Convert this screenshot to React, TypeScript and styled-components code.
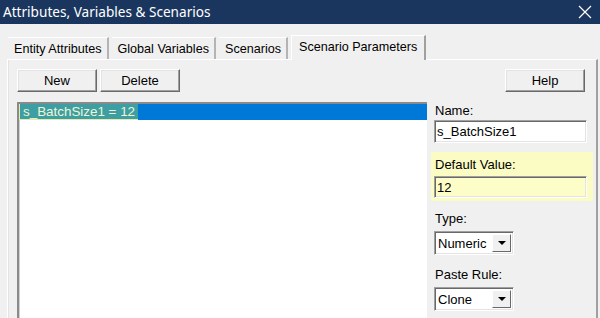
import React from 'react';
import styled, { createGlobalStyle } from 'styled-components';

const GlobalStyle = createGlobalStyle`
  html, body {
    margin: 0;
    padding: 0;
    background: #f0f0f0;
  }
  body {
    font-family: "Liberation Sans", Arial, sans-serif;
    font-size: 13px;
    color: #000;
  }
`;

const Window = styled.div`
  width: 600px;
  height: 318px;
  display: flex;
  flex-direction: column;
  overflow: hidden;
  background: #f0f0f0;
`;

const TitleBar = styled.div`
  height: 24px;
  flex: none;
  background: #1b365e;
  color: #fff;
  display: flex;
  align-items: center;
  justify-content: space-between;
  padding: 0 8px 0 3px;
`;

const TitleText = styled.span`
  font-family: "Noto Sans", "Open Sans", sans-serif;
  font-size: 13.6px;
  line-height: 24px;
`;

const Body = styled.div`
  flex: 1;
  min-height: 0;
  display: flex;
  flex-direction: column;
  padding: 10px 2px 0 7px;
`;

const TabStrip = styled.div`
  display: flex;
  align-items: flex-end;
  height: 25px;
  padding-left: 1px;
  position: relative;
  z-index: 1;
`;

const Tab = styled.div<{ active?: boolean }>`
  height: ${p => (p.active ? 25 : 22)}px;
  margin-bottom: ${p => (p.active ? -1 : 0)}px;
  padding: 0 ${p => (p.active ? 7 : 5)}px 0 ${p => (p.active ? 7 : 6)}px;
  box-sizing: border-box;
  display: flex;
  align-items: center;
  font-size: 12.6px;
  background: #f0f0f0;
  border-top: 1px solid #fff;
  border-left: ${p => (p.active ? '1px solid #fff' : 'none')};
  border-right: 2px solid ${p => (p.active ? '#a0a0a0' : '#b4b4b4')};
  margin-right: 3px;
  padding-bottom: ${p => (p.active ? 3 : 0)}px;
`;

const Panel = styled.div`
  flex: 1;
  min-height: 0;
  display: grid;
  grid-template-columns: 410px 153px;
  column-gap: 7px;
  padding: 9px 0 0 9px;
  border-top: 1px solid #fff;
  border-left: 1px solid #fff;
  border-right: 2px solid #a0a0a0;
  box-shadow: inset 1px 0 0 #e3e3e3;
`;

const LeftColumn = styled.div`
  display: flex;
  flex-direction: column;
  min-height: 0;
`;

const ButtonRow = styled.div<{ align?: 'start' | 'end' }>`
  display: flex;
  gap: 3px;
  justify-content: ${p => (p.align === 'end' ? 'flex-end' : 'flex-start')};
  padding-right: ${p => (p.align === 'end' ? 2 : 0)}px;
`;

const Button = styled.button`
  width: 80px;
  height: 23px;
  padding: 0;
  font-family: "Liberation Sans", Arial, sans-serif;
  font-size: 13px;
  color: #000;
  background: #f0f0f0;
  border: 1px solid;
  border-color: #fff #696969 #696969 #fff;
  box-shadow: inset -1px -1px 0 #a0a0a0, inset 1px 1px 0 #e3e3e3;
`;

const ListBox = styled.div`
  margin-top: 10px;
  flex: 1;
  background: #fff;
  border-top: 2px solid;
  border-left: 2px solid;
  border-color: #8a8a8a;
  box-shadow: inset 1px 1px 0 #d0d0d0;
`;

const ListRow = styled.div<{ selected?: boolean }>`
  height: 16px;
  display: flex;
  align-items: center;
  background: ${p => (p.selected ? '#0078d7' : 'transparent')};
`;

const RowText = styled.span`
  height: 16px;
  line-height: 15px;
  padding: 0 3px;
  box-sizing: border-box;
  background: #3d9ea3;
  color: #f2f5d4;
  border-left: 1px solid #e4eca8;
  border-bottom: 1px solid #e4eca8;
  font-size: 13.4px;
`;

const RightColumn = styled.div`
  display: flex;
  flex-direction: column;
`;

const Label = styled.div<{ gap?: number }>`
  margin-top: ${p => p.gap ?? 0}px;
  line-height: 15px;
  padding-left: 1px;
  color: #000;
`;

const Highlight = styled.div`
  margin: 9px -6px 0 -3px;
  padding: 5px 6px 3px 3px;
  background: #fbfcc4;
`;

const TextInput = styled.div<{ tone?: 'white' | 'yellow'; h?: number }>`
  margin-top: ${p => (p.tone === 'yellow' ? 4 : 2)}px;
  height: ${p => p.h ?? 23}px;
  box-sizing: border-box;
  display: flex;
  align-items: center;
  padding-left: 2px;
  background: ${p => (p.tone === 'yellow' ? '#fdfdc8' : '#fff')};
  border: 1px solid;
  border-color: #a0a0a0 #fff #fff #a0a0a0;
  box-shadow: inset 1px 1px 0 #696969, inset -1px -1px 0 #e3e3e3;
`;

const Select = styled.div`
  margin-top: 5px;
  width: 80px;
  height: 24px;
  box-sizing: border-box;
  display: flex;
  align-items: stretch;
  background: #fff;
  border: 1px solid;
  border-color: #a0a0a0 #fff #fff #a0a0a0;
  box-shadow: inset 1px 1px 0 #696969, inset -1px -1px 0 #e3e3e3;
  padding: 2px;
`;

const SelectValue = styled.span`
  flex: 1;
  display: flex;
  align-items: center;
  padding-left: 1px;
`;

const DropButton = styled.span`
  width: 17px;
  display: flex;
  align-items: center;
  justify-content: center;
  background: #f0f0f0;
  border: 1px solid;
  border-color: #fff #696969 #696969 #fff;
`;

const Arrow = styled.span`
  width: 0;
  height: 0;
  border-left: 4px solid transparent;
  border-right: 4px solid transparent;
  border-top: 4px solid #000;
`;

const CloseIcon = () => (
  <svg width="14" height="14" viewBox="0 0 14 14">
    <path d="M1 1 L13 13 M13 1 L1 13" stroke="#fff" strokeWidth="1.2" fill="none" />
  </svg>
);

export default function App() {
  return (
    <Window>
      <GlobalStyle />
      <TitleBar>
        <TitleText>Attributes, Variables &amp; Scenarios</TitleText>
        <CloseIcon />
      </TitleBar>
      <Body>
        <TabStrip>
          <Tab>Entity Attributes</Tab>
          <Tab>Global Variables</Tab>
          <Tab>Scenarios</Tab>
          <Tab active>Scenario Parameters</Tab>
        </TabStrip>
        <Panel>
          <LeftColumn>
            <ButtonRow>
              <Button>New</Button>
              <Button>Delete</Button>
            </ButtonRow>
            <ListBox>
              <ListRow selected>
                <RowText>s_BatchSize1 = 12</RowText>
              </ListRow>
            </ListBox>
          </LeftColumn>
          <RightColumn>
            <ButtonRow align="end">
              <Button>Help</Button>
            </ButtonRow>
            <Label gap={11}>Name:</Label>
            <TextInput>s_BatchSize1</TextInput>
            <Highlight>
              <Label>Default Value:</Label>
              <TextInput tone="yellow" h={22}>12</TextInput>
            </Highlight>
            <Label gap={10}>Type:</Label>
            <Select>
              <SelectValue>Numeric</SelectValue>
              <DropButton><Arrow /></DropButton>
            </Select>
            <Label gap={12}>Paste Rule:</Label>
            <Select>
              <SelectValue>Clone</SelectValue>
              <DropButton><Arrow /></DropButton>
            </Select>
          </RightColumn>
        </Panel>
      </Body>
    </Window>
  );
}
